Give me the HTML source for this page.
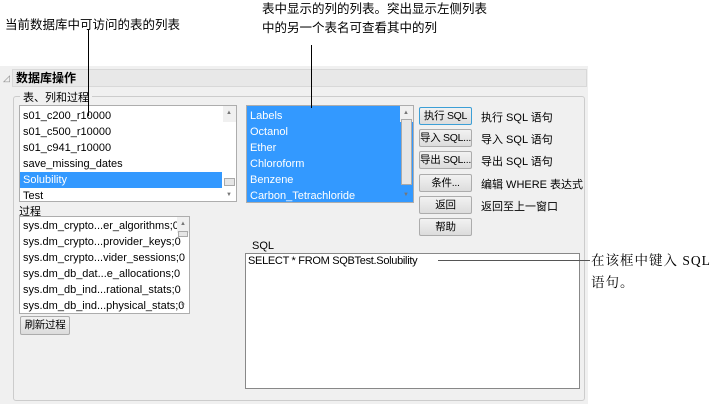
<!DOCTYPE html>
<html><head><meta charset="utf-8"><style>
*{margin:0;padding:0;box-sizing:border-box}
body{width:717px;height:404px;background:#fff;position:relative;overflow:hidden;font-family:"Liberation Sans","Noto Sans CJK SC",sans-serif;font-size:11px;color:#000}
.a{position:absolute}
.bg{left:0;top:66px;width:588px;height:338px;background:#f0f0f0}
.hdr{left:12px;top:69px;width:575px;height:18px;background:#e8e8e8;border:1px solid #d8d8d8;font-weight:bold;font-size:12px;padding-left:3px;line-height:16px}
.grp{left:13px;top:96px;width:572px;height:305px;border:1px solid #ccc;border-radius:3px}
.list{background:#fff;border:1px solid #adadad;overflow:hidden}
.list div{height:16px;line-height:16px;padding-left:3px;white-space:nowrap}
.sel{background:#3399ff;color:#fff}
.sb{position:absolute;right:0;top:0;bottom:0;width:13px;background:#f0f0f0}
.ar{position:absolute;left:3px;font-size:6px;color:#777;height:auto!important;line-height:6px!important;padding:0!important}
.btn{position:absolute;left:419px;width:53px;height:18px;border:1px solid #acacac;border-radius:2px;background:linear-gradient(#f2f2f2,#dcdcdc);text-align:center;line-height:16px;font-size:10.5px;white-space:nowrap;overflow:hidden;letter-spacing:-0.3px}
.lbl{position:absolute;left:481px;font-size:11px}
.line{position:absolute;background:#000}
.note{position:absolute;font-size:12.5px}
</style></head><body>
<div class="note" style="left:5px;top:14px">当前数据库中可访问的表的列表</div>
<div class="note" style="left:262px;top:0px;line-height:19px">表中显示的列的列表。突出显示左侧列表<br>中的另一个表名可查看其中的列</div>
<div class="a bg"></div>
<div class="a" style="left:3px;top:73px;font-size:9px;color:#888">◿</div>
<div class="a hdr">数据库操作</div>
<div class="a grp"></div>
<div class="a" style="left:20px;top:89px;background:#f0f0f0;padding:0 3px;font-size:11px">表、列和过程</div>
<div class="a list" style="left:19px;top:105px;width:218px;height:97px;padding-top:2px">
<div>s01_c200_r10000</div><div>s01_c500_r10000</div><div>s01_c941_r10000</div><div>save_missing_dates</div><div class="sel" style="margin-right:14px">Solubility</div><div>Test</div>
<div class="sb"><div class="ar" style="top:4px">▲</div><div class="a" style="left:1px;top:72px;width:11px;height:8px;border:1px solid #aaa;background:#e6e6e6"></div><div class="ar" style="top:86px">▼</div></div>
</div>
<div class="a list" style="left:246px;top:105px;width:168px;height:98px;background:#3399ff;color:#fff;padding-top:2px">
<div>Labels</div><div>Octanol</div><div>Ether</div><div>Chloroform</div><div>Benzene</div><div>Carbon_Tetrachloride</div>
<div class="sb"><div class="ar" style="top:4px">▲</div><div class="a" style="left:1px;top:13px;width:11px;height:66px;border:1px solid #aaa;background:#e6e6e6"></div><div class="ar" style="top:86px">▼</div></div>
</div>
<div class="btn" style="top:107px;border-color:#3c9fd6">执行 SQL</div><div class="lbl" style="top:109px">执行 SQL 语句</div>
<div class="btn" style="top:129px">导入 SQL...</div><div class="lbl" style="top:131px">导入 SQL 语句</div>
<div class="btn" style="top:151px">导出 SQL...</div><div class="lbl" style="top:153px">导出 SQL 语句</div>
<div class="btn" style="top:174px">条件...</div><div class="lbl" style="top:176px">编辑 WHERE 表达式</div>
<div class="btn" style="top:196px">返回</div><div class="lbl" style="top:198px">返回至上一窗口</div>
<div class="btn" style="top:218px">帮助</div>
<div class="a" style="left:19px;top:203px">过程</div>
<div class="a list" style="left:19px;top:216px;width:171px;height:98px;padding-top:1px">
<div>sys.dm_crypto...er_algorithms;0</div><div>sys.dm_crypto...provider_keys;0</div><div>sys.dm_crypto...vider_sessions;0</div><div>sys.dm_db_dat...e_allocations;0</div><div>sys.dm_db_ind...rational_stats;0</div><div>sys.dm_db_ind...physical_stats;0</div>
<div class="sb" style="width:12px"><div class="ar" style="top:4px">▲</div><div class="a" style="left:1px;top:14px;width:10px;height:6px;border:1px solid #aaa;background:#e6e6e6"></div><div class="ar" style="top:86px">▼</div></div>
</div>
<div class="btn" style="left:20px;top:316px;width:50px;height:19px">刷新过程</div>
<div class="a" style="left:252px;top:240px">SQL</div>
<div class="a" style="left:245px;top:253px;width:335px;height:136px;background:#fff;border:1px solid #888;padding:1px 2px;letter-spacing:-0.3px">SELECT * FROM SQBTest.Solubility</div>
<div class="line" style="left:88px;top:30px;width:1px;height:86px"></div>
<div class="line" style="left:311px;top:45px;width:1px;height:63px"></div>
<div class="line" style="left:438px;top:260px;width:152px;height:1px;background:#555"></div>
<div class="note" style="left:591px;top:250px;line-height:22px;font-size:13.5px;font-family:'Liberation Serif','Noto Serif CJK SC',serif;letter-spacing:1px;white-space:nowrap">在该框中键入 SQL<br>语句。</div>
</body></html>
